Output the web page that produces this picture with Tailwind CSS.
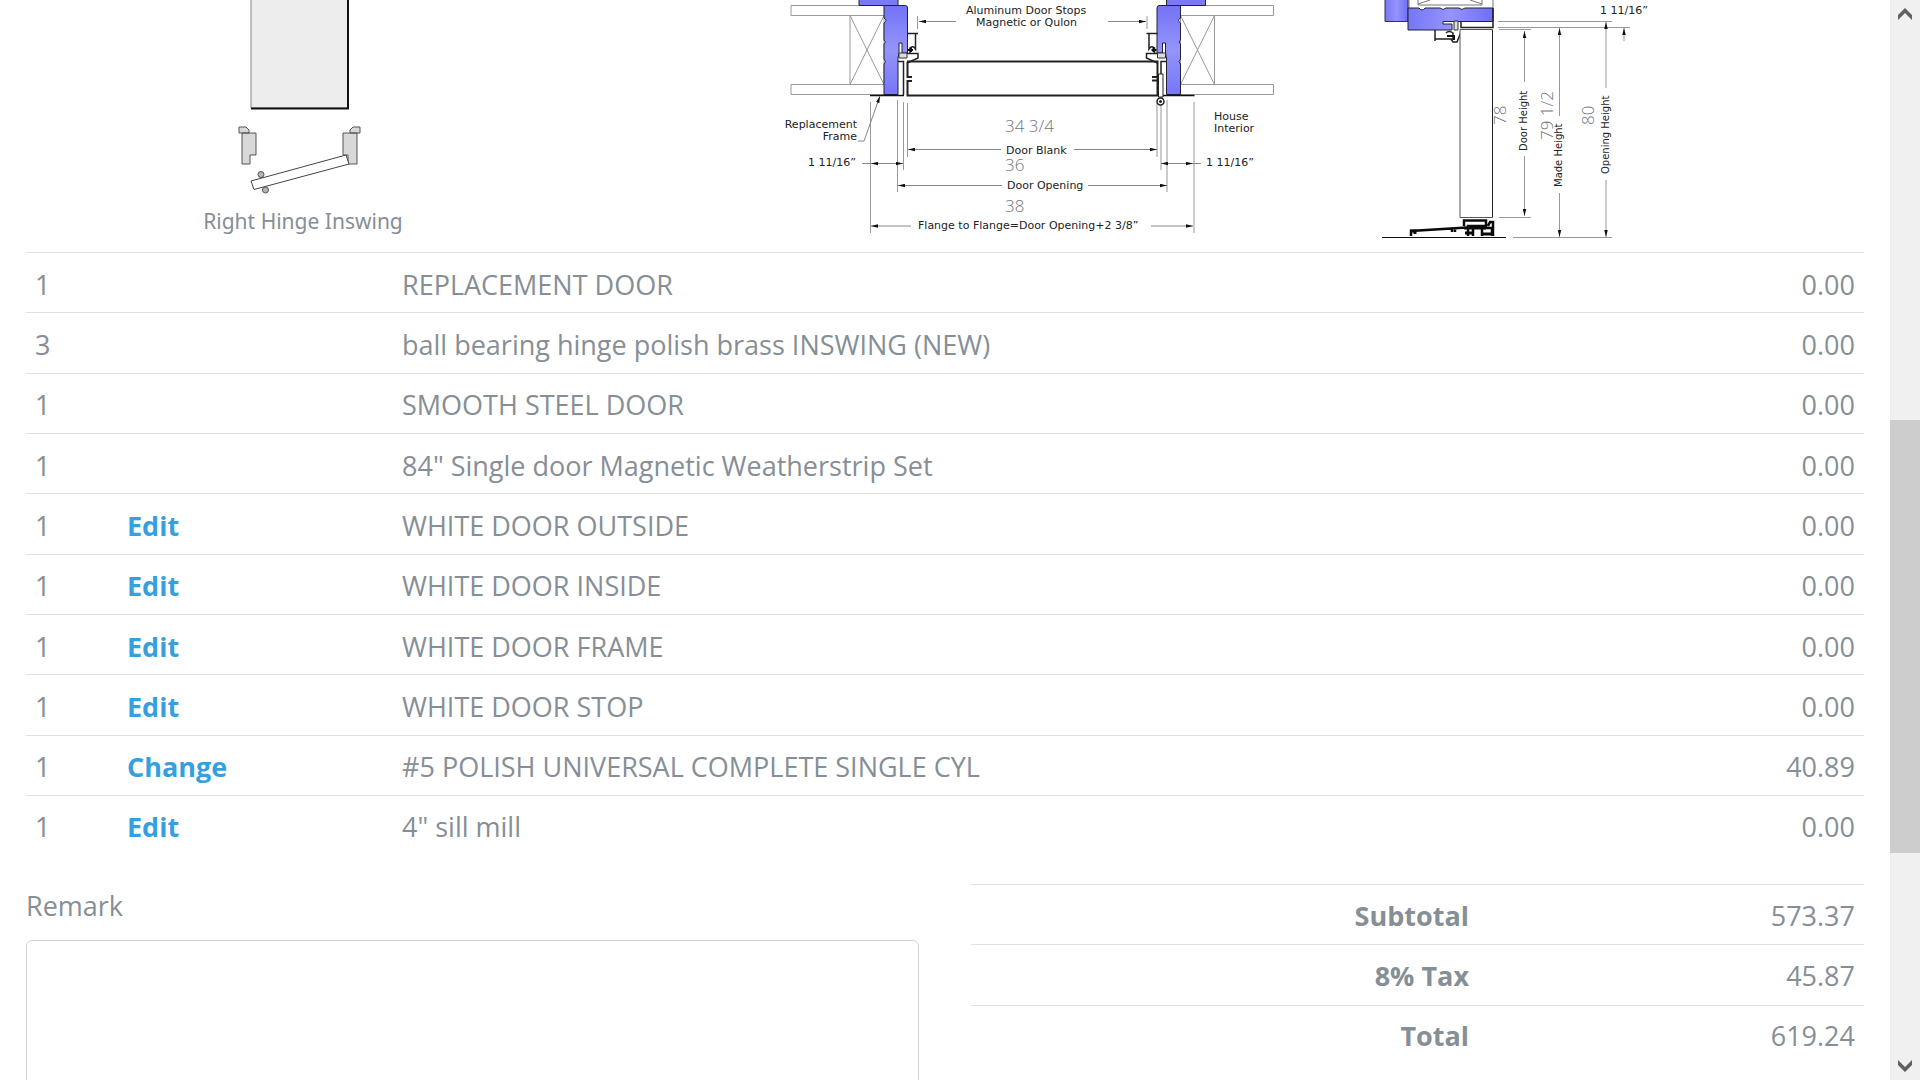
<!DOCTYPE html>
<html lang="en">
<head>
<meta charset="utf-8">
<title>Door order</title>
<script src="https://cdn.jsdelivr.net/npm/@tailwindcss/browser@4"></script>
</head>
<body class="flex h-screen overflow-hidden bg-white font-['Open_Sans','Noto_Sans',sans-serif] text-[27px] leading-10 text-[#868e96]">
<main class="min-w-0 flex-1 overflow-hidden px-[26px]">

  <section class="flex h-[252px] items-start" aria-label="Door drawings">
    <figure class="flex w-[554px] shrink-0 flex-col items-center">
      <svg class="h-[200px] w-[140px]" viewBox="233 0 140 200" fill="none">
        <path d="M251 -2V108H348V-2Z" fill="#ededed" stroke="#888"/>
        <path d="M348 0V108.500M251 108.500H349" stroke="#111" stroke-width="2"/>
        <g fill="#d9d7d8" stroke="#555">
          <path d="M239 127H246L249 130V133H239ZM242 133H256V155H250V164H242Z"/>
          <path d="M360 127H353L350 130V133H360ZM357 133H343V155H348V164H357Z"/>
        </g>
        <g fill="#b5b5b5" stroke="#555"><circle cx="261" cy="174.500" r="3"/><circle cx="265.500" cy="190" r="3"/></g>
        <path d="M251 181L346 155L349 164L254 189.500Z" fill="#fff" stroke="#444"/>
      </svg>
      <figcaption class="mt-[7px] font-['Noto_Sans',sans-serif] text-[21px] leading-7">Right Hinge Inswing</figcaption>
    </figure>

    <svg class="ml-[190px] h-[250px] w-[520px] shrink-0" viewBox="770 0 520 250" fill="none" role="img" aria-label="Door width section">
      <defs>
        <linearGradient id="jamb" x1="0" y1="0" x2="0" y2="1"><stop offset="0" stop-color="#7373f8"/><stop offset=".5" stop-color="#9494fb"/><stop offset="1" stop-color="#7676f8"/></linearGradient>
        <linearGradient id="head" x1="0" y1="0" x2="1" y2="0"><stop offset="0" stop-color="#7676f8"/><stop offset=".5" stop-color="#9494fb"/><stop offset="1" stop-color="#6f6ff8"/></linearGradient>
        <marker id="arrow" viewBox="0 0 8 4" refX="8" refY="2" markerWidth="7" markerHeight="4" markerUnits="userSpaceOnUse" orient="auto-start-reverse"><path d="M0 0L8 2L0 4Z" fill="#111"/></marker>
        <g id="frame">
          <path d="M884 5.500H791V15.500H884M884 84.500H791V94.500H884M850 15.500H884V84.500H850ZM850 15.500L884 84.500M884 15.500L850 84.500" stroke="#999"/>
          <path d="M859 -3H898V5.500H859Z" fill="#7979f9" stroke="#223"/>
          <path d="M884 5.500H905.500Q907.500 5.500 907.500 8V53H902V43H899V53L898 58V94.500H884V64Q887 62 884 59V44Q887 42 884 40V23Q888 20 884 18Z" fill="url(#jamb)" stroke="#223"/>
          <path d="M899 53H907V58H899Z" fill="#ddd" stroke="#333"/>
          <path d="M907 33.500H918M915.500 34V49Q913 45 910 48V53M907 53.500H918V58L907 63M898 61.500H903.500V95" stroke="#222" stroke-width="1.500"/>
          <path d="M911 47V52M908 50H913" stroke="#111" stroke-width="2"/>
          <path d="M870 95.500H904" stroke="#111" stroke-width="1.500"/>
          <path d="M917.500 16V29M870.500 102V233M897.500 100V192M903.500 102V170M907.500 103V157" stroke="#999"/>
        </g>
      </defs>
      <use href="#frame"/>
      <use href="#frame" transform="matrix(-1 0 0 1 2064.500 0)"/>
      <path d="M907 61.500H1157.500V95.500H907.500V81H912M907.500 62V77H912M1157 77H1152M1157 80.500H1152" stroke="#222" stroke-width="2"/>
      <path d="M1158.500 74H1163V97H1158.500Z" fill="#fff" stroke="#222"/>
      <circle cx="1160.500" cy="101.500" r="3.500" fill="#fff" stroke="#222" stroke-width="1.500"/><circle cx="1160.500" cy="101.500" r="1.500" fill="#222"/>
      <g stroke="#888">
        <path d="M956 21.500H919" marker-end="url(#arrow)"/><path d="M1108 21.500H1146" marker-end="url(#arrow)"/>
        <path d="M1001 149.500H908" marker-end="url(#arrow)"/><path d="M1074 149.500H1157" marker-end="url(#arrow)"/>
        <path d="M1002 185.500H898" marker-end="url(#arrow)"/><path d="M1088 185.500H1167" marker-end="url(#arrow)"/>
        <path d="M911 226H871" marker-end="url(#arrow)"/><path d="M1151 226H1193" marker-end="url(#arrow)"/>
        <path d="M871 163.500H903" marker-start="url(#arrow)" marker-end="url(#arrow)"/><path d="M1161 163.500H1193" marker-start="url(#arrow)" marker-end="url(#arrow)"/>
        <path d="M862 163.500H871M1193 163.500H1201"/>
        <path d="M858 141H864L880 96" marker-end="url(#arrow)"/>
      </g>
      <g class="fill-[#222] font-['DejaVu_Sans',sans-serif] text-[11px]">
        <text x="966" y="14">Aluminum Door Stops</text>
        <text x="976" y="26">Magnetic or Qulon</text>
        <text x="857" y="128" text-anchor="end">Replacement</text>
        <text x="857" y="140" text-anchor="end">Frame</text>
        <text x="808" y="166">1 11/16”</text>
        <text x="1214" y="120">House</text>
        <text x="1214" y="132">Interior</text>
        <text x="1206" y="166">1 11/16”</text>
        <text x="1006" y="154">Door Blank</text>
        <text x="1007" y="189">Door Opening</text>
        <text x="918" y="229">Flange to Flange=Door Opening+2 3/8”</text>
      </g>
      <g class="fill-[#6f7780] text-[17px] font-light">
        <text x="1005" y="132">34 3/4</text>
        <text x="1005" y="171">36</text>
        <text x="1005" y="212">38</text>
      </g>
    </svg>

    <svg class="ml-20 h-[250px] w-[290px] shrink-0" viewBox="1370 0 290 250" fill="none" role="img" aria-label="Door height section">
      <path d="M1409 0V8M1418 0V5H1482V0M1418 4L1430 0M1482 4L1470 0M1493 0V8" stroke="#777"/>
      <path d="M1385 -2H1408V21.500H1385Z" fill="url(#head)" stroke="#334"/>
      <path d="M1408 8H1419Q1422 12 1425 8H1440Q1443 11 1446 8H1459Q1462 11 1465 8H1493V21.500H1443V24H1452V30H1408Z" fill="url(#head)" stroke="#223"/>
      <path d="M1454 21H1458V30H1454Z" fill="#ddd" stroke="#333"/>
      <path d="M1461 22V27.500H1493V8M1435 30V41M1435 39H1451L1453 42H1457L1461 32M1446 33Q1449 30 1453 33V39H1446" stroke="#222" stroke-width="1.500"/>
      <path d="M1447 36H1454V40" stroke="#111" stroke-width="2"/>
      <path d="M1460 29.500H1492.500V217.500H1460Z" fill="#fff" stroke="#555"/>
      <path d="M1492.500 30V217" stroke="#222"/>
      <path d="M1382 237.500H1506" stroke="#111"/>
      <path d="M1411 236V231L1467 227.500M1452 229V232M1455 229V232M1464 226V220.500H1486V226H1468V236M1473 228V236M1482 236V228H1492V236M1488 226L1490 222H1493V236" stroke="#0a0a0a" stroke-width="2.500"/>
      <path d="M1410 231H1415V234M1464 228H1486M1465 233H1473M1482 234H1494" stroke="#0a0a0a" stroke-width="3"/>
      <g stroke="#999">
        <path d="M1498 21.500H1612M1498 27.500H1630M1499 29.500H1531M1499 217.500H1531M1513 237.500H1612"/>
        <path d="M1524.500 82V31" marker-end="url(#arrow)"/><path d="M1524.500 156V216" marker-end="url(#arrow)"/>
        <path d="M1559.500 116V28" marker-end="url(#arrow)"/><path d="M1559.500 193V237" marker-end="url(#arrow)"/>
        <path d="M1606 88V22" marker-end="url(#arrow)"/><path d="M1606 180V237" marker-end="url(#arrow)"/>
        <path d="M1624 41V28" marker-end="url(#arrow)"/>
      </g>
      <g class="fill-[#222] font-['DejaVu_Sans',sans-serif] text-[10px]">
        <text class="text-[11px]" x="1600" y="14">1 11/16”</text>
        <text transform="translate(1527 151) rotate(-90)">Door Height</text>
        <text transform="translate(1562 187) rotate(-90)">Made Height</text>
        <text transform="translate(1609 174) rotate(-90)">Opening Height</text>
      </g>
      <g class="fill-[#6f7780] text-[17px] font-light">
        <text transform="translate(1506 125) rotate(-90)">78</text>
        <text transform="translate(1553 140) rotate(-90)">79 1/2</text>
        <text transform="translate(1594 125) rotate(-90)">80</text>
      </g>
    </svg>
  </section>

  <table class="h-[603px] w-full table-fixed border-collapse text-left [&_td]:border-t [&_td]:border-[#dee2e6] [&_td]:px-[9px] [&_td]:pt-1">
    <colgroup><col class="w-[92px]"><col class="w-[275px]"><col><col class="w-[200px]"></colgroup>
    <tbody>
      <tr><td>1</td><td></td><td>REPLACEMENT DOOR</td><td class="text-right">0.00</td></tr>
      <tr><td>3</td><td></td><td>ball bearing hinge polish brass INSWING (NEW)</td><td class="text-right">0.00</td></tr>
      <tr><td>1</td><td></td><td>SMOOTH STEEL DOOR</td><td class="text-right">0.00</td></tr>
      <tr><td>1</td><td></td><td>84" Single door Magnetic Weatherstrip Set</td><td class="text-right">0.00</td></tr>
      <tr><td>1</td><td><a href="#" class="font-bold text-[#369fdf]">Edit</a></td><td>WHITE DOOR OUTSIDE</td><td class="text-right">0.00</td></tr>
      <tr><td>1</td><td><a href="#" class="font-bold text-[#369fdf]">Edit</a></td><td>WHITE DOOR INSIDE</td><td class="text-right">0.00</td></tr>
      <tr><td>1</td><td><a href="#" class="font-bold text-[#369fdf]">Edit</a></td><td>WHITE DOOR FRAME</td><td class="text-right">0.00</td></tr>
      <tr><td>1</td><td><a href="#" class="font-bold text-[#369fdf]">Edit</a></td><td>WHITE DOOR STOP</td><td class="text-right">0.00</td></tr>
      <tr><td>1</td><td><a href="#" class="font-bold text-[#369fdf]">Change</a></td><td>#5 POLISH UNIVERSAL COMPLETE SINGLE CYL</td><td class="text-right">40.89</td></tr>
      <tr><td>1</td><td><a href="#" class="font-bold text-[#369fdf]">Edit</a></td><td>4" sill mill</td><td class="text-right">0.00</td></tr>
    </tbody>
  </table>

  <section class="mt-[29px] grid grid-cols-2 items-start gap-[52px]">
    <div class="flex flex-col gap-[14px] pt-[2px]">
      <label for="remark">Remark</label>
      <textarea id="remark" class="h-60 w-full resize-none rounded-md border border-[#ced4da] bg-white px-4 py-2 outline-none"></textarea>
    </div>
    <table class="h-[181px] w-full table-fixed border-collapse text-right [&_td]:border-t [&_td]:border-[#dee2e6] [&_td]:px-[9px] [&_td]:pt-[2px] [&_th]:border-t [&_th]:border-[#dee2e6] [&_th]:px-[9px] [&_th]:pt-[2px]">
      <colgroup><col><col class="w-[386px]"></colgroup>
      <tbody>
        <tr><th scope="row">Subtotal</th><td>573.37</td></tr>
        <tr><th scope="row">8% Tax</th><td>45.87</td></tr>
        <tr><th scope="row">Total</th><td>619.24</td></tr>
      </tbody>
    </table>
  </section>
</main>

<aside class="flex w-[30px] shrink-0 flex-col items-center bg-[#f0f0f0]" aria-label="Scroll">
  <button class="flex h-[30px] w-full items-center justify-center" aria-label="Scroll up"><svg class="size-4" viewBox="0 0 16 16"><path d="M1 8L8 1L15 8V13L8 6L1 13Z" fill="#606060"/></svg></button>
  <div class="w-full flex-[390]"></div>
  <div class="w-full flex-[433] bg-[#cdcdcd]"></div>
  <div class="w-full flex-[197]"></div>
  <button class="flex h-[30px] w-full items-center justify-center" aria-label="Scroll down"><svg class="size-4" viewBox="0 0 16 16"><path d="M1 8L8 15L15 8V3L8 10L1 3Z" fill="#606060"/></svg></button>
</aside>
</body>
</html>
